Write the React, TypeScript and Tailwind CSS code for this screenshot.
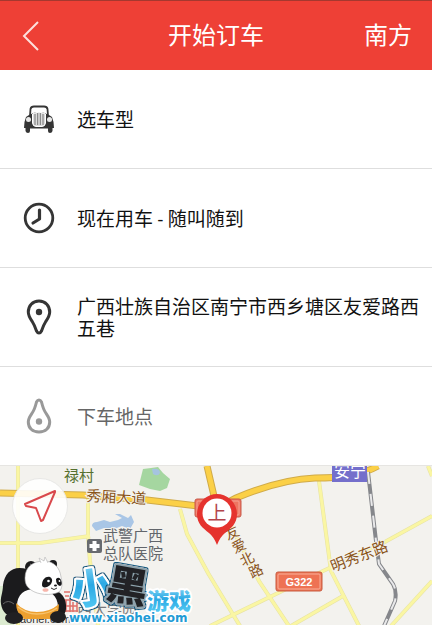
import React from "react";

const rows = [
  { id: "car", label: "选车型", icon: "car", muted: false },
  { id: "time", label: "现在用车 - 随叫随到", icon: "clock", muted: false },
  {
    id: "from",
    label: "广西壮族自治区南宁市西乡塘区友爱路西五巷",
    icon: "pin",
    muted: false,
  },
  { id: "to", label: "下车地点", icon: "drop", muted: true },
];

const minorRoads = [
  "M18 0V160",
  "M0 77H40L90 70",
  "M88 30V70L90 95L98 160",
  "M180 43L187 68L208 107L240 160",
  "M226 50L259 115L289 160",
  "M319 15L331 105L359 160",
  "M210 160L276 128L323 105L383 77L432 50",
  "M291 160L343 130",
  "M391 160L432 115",
  "M428 0L432 10",
];

const mainRoads = [
  "M0 27L83 29L147 34L215 42",
  "M207 0L214 30L217 42",
  "M217 42L236 32C262 21 290 13 315 12C340 12 360 10 378 0",
];

const railway = "M368 6L376 75L379 98L393 118Q397 125 395 135L384 160";

const CarIcon = () => (
  <svg viewBox="0 0 32 30" className="h-[30px] w-8">
    <path
      d="M7 12L7.500 5Q8 2.500 11 2.500H21Q24 2.500 24.500 5L25 12"
      fill="none"
      stroke="#353535"
      strokeWidth="1.800"
    />
    <path
      d="M6 11Q16 5 26 11L29 13L30.500 18L31 24H29.500V27Q29 29 27 29Q25 29 25 27V24.500H7V27Q7 29 5 29Q3 29 2.500 27V24H1L1.500 18L3 13Z"
      fill="#353535"
    />
    <path
      d="M9.500 10Q16 6.500 22.500 10V19Q22 22.500 19 22.500H13Q10 22.500 9.500 19Z"
      fill="#ddd"
      stroke="#fff"
      strokeWidth="1"
    />
    <path
      d="M12 10V21M14.700 9V21M17.300 9V21M20 10V21"
      stroke="#777"
      strokeWidth="1"
    />
    <circle cx="5.500" cy="15.500" r="2.500" fill="#e8e8e8" />
    <circle cx="26.500" cy="15.500" r="2.500" fill="#e8e8e8" />
  </svg>
);

const ClockIcon = () => (
  <svg viewBox="0 0 32 32" className="size-8" fill="none" stroke="#353535">
    <circle cx="16" cy="16" r="13.800" strokeWidth="2.800" />
    <path
      d="M16.500 8V17L10 21"
      strokeWidth="3.200"
      strokeLinecap="round"
      strokeLinejoin="round"
    />
  </svg>
);

const PinIcon = () => (
  <svg viewBox="0 0 26 36" className="h-9 w-[26px]">
    <path
      d="M13 2C6.500 2 2.300 6.800 2.300 13C2.300 17 4.500 20 6.500 23C8.500 26 9.500 29 10.500 32Q11.500 34 13 34Q14.500 34 15.500 32C16.500 29 17.500 26 19.500 23C21.500 20 23.700 17 23.700 13C23.700 6.800 19.500 2 13 2Z"
      fill="none"
      stroke="#353535"
      strokeWidth="3"
    />
    <circle cx="13" cy="13" r="3.200" fill="#353535" />
  </svg>
);

const DropIcon = () => (
  <svg viewBox="0 0 26 36" className="h-9 w-[26px]">
    <path
      d="M13 34C6.500 34 2.300 30 2.300 24C2.300 20 4.500 17.500 6.500 14.500C8.500 11.500 9.500 8 10.500 4Q11.500 2 13 2Q14.500 2 15.500 4C16.500 8 17.500 11.500 19.500 14.500C21.500 17.500 23.700 20 23.700 24C23.700 30 19.500 34 13 34Z"
      fill="none"
      stroke="#999"
      strokeWidth="3"
    />
    <circle cx="13" cy="23.500" r="3.200" fill="#999" />
  </svg>
);

const icons: Record<string, React.ReactNode> = {
  car: <CarIcon />,
  clock: <ClockIcon />,
  pin: <PinIcon />,
  drop: <DropIcon />,
};

const Panda = () => (
  <g>
    {/* BODY */}
    <path
      d="M27 103C13 99 5 106 3 119C3 127 0 131 1 138C2 146 8 151 16 152L30 148L36 118Z"
      fill="#1b1b1d"
    />
    <path
      d="M52 124C61 124 67 133 66 143C65 151 59 154 50 153Z"
      fill="#1b1b1d"
    />
    <path
      d="M17 140C17 127 26 122 38 123C50 123 58 130 58 141C58 150 50 152 38 152C25 152 17 150 17 140Z"
      fill="#fbfbfb"
    />
    <path
      d="M16 137Q24 146 37 146Q50 146 59 138Q59 148 53 153H24Q16 147 16 137Z"
      fill="#eda02f"
    />
    <path
      d="M18 141Q26 148 37 148Q49 148 57 142"
      fill="none"
      stroke="#f8c36d"
      strokeWidth="1.500"
    />
    <ellipse cx="14" cy="152" rx="9" ry="6" fill="#202022" />
    <ellipse cx="58" cy="151" rx="8" ry="6" fill="#202022" />
    <path d="M3 138Q8 133 14 138" fill="none" stroke="#666" />
    {/* HEAD */}
    <circle cx="31" cy="101" r="6" fill="#1b1b1d" />
    <path d="M30 98Q34 99 34 103" fill="none" stroke="#777" />
    <circle cx="53" cy="98" r="4" fill="#1b1b1d" />
    <path
      d="M25 112C25 100 34 95 44 95C54 95 60 102 61 111C63 118 62 123 59 126C51 130 38 129 31 124C27 121 25 118 25 112Z"
      fill="#fff"
      stroke="#aaa"
      strokeWidth="0.600"
    />
    <path
      d="M41 97L39 92L44 95L45 91L48 97"
      fill="#fff"
      stroke="#bbb"
      strokeWidth="0.700"
    />
    <path
      d="M42 119C42 113 46 110 50 111C54 113 52 119 47 121C44 122 42 121 42 119Z"
      fill="#19191b"
    />
    <path
      d="M56 113Q59 110 61 114Q63 119 60 120Q56 119 56 113Z"
      fill="#19191b"
    />
    <circle cx="48.500" cy="115" r="1.300" fill="#fff" />
    <circle cx="59.500" cy="115" r="0.900" fill="#fff" />
    <ellipse cx="45.500" cy="124" rx="3" ry="1.800" fill="#f7b6ac" />
    <ellipse cx="55.500" cy="119.500" rx="1.500" ry="1" fill="#19191b" />
    <path d="M51 122Q54 125 57 122" fill="none" stroke="#333" />
  </g>
);

const SiteLogo = () => (
  <g fontFamily="'Noto Sans CJK SC', sans-serif" fontWeight="900">
    <defs>
      <linearGradient id="blue" x1="0" y1="0" x2="0" y2="1">
        <stop offset="0" stopColor="#a5e5fb" />
        <stop offset="0.500" stopColor="#2ba9e4" />
        <stop offset="1" stopColor="#5ed0f5" />
      </linearGradient>
      <filter id="edge" x="-20%" y="-20%" width="140%" height="140%">
        <feMorphology in="SourceAlpha" operator="dilate" radius="1" />
        <feComposite in2="SourceAlpha" operator="out" result="rim" />
        <feFlood floodColor="#175a80" />
        <feComposite in2="rim" operator="in" />
        <feComposite in="SourceGraphic" operator="over" />
        <feMerge>
          <feMergeNode />
        </feMerge>
      </filter>
    </defs>
    <g strokeLinejoin="round" paintOrder="stroke">
      <g filter="url(#edge)">
        <text
          x="71"
          y="137"
          fontSize="41"
          fill="url(#blue)"
          stroke="#fff"
          strokeWidth="4"
          transform="rotate(-8 91 122)"
        >
          小
        </text>
      </g>
      <g filter="url(#edge)">
        <text
          x="107"
          y="135"
          fontSize="41"
          fill="#202326"
          stroke="#8fa3ad"
          strokeWidth="4"
          transform="rotate(10 127 120)"
        >
          黑
        </text>
      </g>
      <text
        x="147"
        y="143"
        fontSize="22"
        fill="url(#blue)"
        stroke="#fff"
        strokeWidth="4"
      >
        游戏
      </text>
      <text
        x="69"
        y="156"
        fontSize="12"
        fontFamily="'DejaVu Sans', sans-serif"
        fontWeight="700"
        fill="#229bd5"
        stroke="#fff"
        strokeWidth="3"
      >
        www.xiaohei.com
      </text>
    </g>
  </g>
);

const CityMap = () => (
  <svg
    viewBox="0 0 432 160"
    preserveAspectRatio="xMidYMid slice"
    className="block w-full"
    fontFamily="'Noto Sans CJK SC', sans-serif"
  >
    <rect width="432" height="160" fill="#f3f2ee" />
    <path d="M0 120H14V160H0Z" fill="#dcebd0" />
    <path
      d="M143 3L151 2L158 1L163 7L170 13L167 22L160 25L150 23L139 19Z"
      fill="#a5d6a0"
    />
    <path d="M152 3Q160 2 160 7Q158 11 153 8Z" fill="#a5c4e0" />
    <path
      d="M92 60Q92 56 97 56L104 54L110 56L118 54L122 52L115 48L120 48L128 52L131 49L134 56L130 63L122 60L114 63L104 62L96 65Z"
      fill="#a9c6e6"
    />
    {minorRoads.map((d) => (
      <path key={d} d={d} fill="none" stroke="#e6e2a4" strokeWidth="4" />
    ))}
    {minorRoads.map((d) => (
      <path key={d} d={d} fill="none" stroke="#faf6a3" strokeWidth="3" />
    ))}
    {mainRoads.map((d) => (
      <path key={d} d={d} fill="none" stroke="#d0ab49" strokeWidth="7" />
    ))}
    {mainRoads.map((d) => (
      <path key={d} d={d} fill="none" stroke="#fbd047" strokeWidth="5" />
    ))}
    <path d={railway} fill="none" stroke="#85878b" strokeWidth="4" />
    <path
      d={railway}
      fill="none"
      stroke="#e9e9ea"
      strokeWidth="2"
      strokeDasharray="12 10"
    />

    {/* LABELS */}
    <g
      fill="#8a5418"
      stroke="#f3f2ee"
      strokeWidth="2"
      paintOrder="stroke"
    >
      <text x="64" y="15" fontSize="15" fill="#55702f">
        禄村
      </text>
      <text x="86" y="35" fontSize="15" transform="rotate(3 86 35)">
        秀厢大道
      </text>
      <text x="103" y="75" fontSize="15" fill="#62666b">
        武警广西
      </text>
      <text x="103" y="93" fontSize="15" fill="#62666b">
        总队医院
      </text>
      <text x="333" y="106" fontSize="15" transform="rotate(-21 333 106)">
        明秀东路
      </text>
      <g fontSize="14" textAnchor="middle">
        <text x="232" y="72" transform="rotate(-25 232 67)">
          友
        </text>
        <text x="239" y="85" transform="rotate(-25 239 80)">
          爱
        </text>
        <text x="247" y="98" transform="rotate(-25 247 93)">
          北
        </text>
        <text x="256" y="110" transform="rotate(-25 256 105)">
          路
        </text>
      </g>
      <text x="77" y="149" fontSize="15" fill="#77797b">
        西大学园
      </text>
    </g>
    <path
      d="M64 126H70M65 130H69M64 134H78M66 134V146M70 132V146M64 140H77M73 136V146M77 136V146M64 145H78"
      stroke="#e0706b"
      strokeWidth="1.500"
    />
    <rect x="87" y="73" width="15" height="14" rx="2" fill="#686b70" />
    <path d="M94.500 75V85M89.500 80H99.500" stroke="#fff" strokeWidth="4" />
    <rect x="332" y="0" width="35" height="16" fill="#746fcb" />
    <text x="334" y="11" fontSize="16" fill="#fff">
      安宁
    </text>
    <rect
      x="276"
      y="106"
      width="46"
      height="19"
      rx="2"
      fill="#ee7253"
      stroke="#c75b3f"
    />
    <rect
      x="278"
      y="108"
      width="42"
      height="15"
      rx="1"
      fill="none"
      stroke="#f9b09a"
    />
    <text
      x="299"
      y="120"
      fontSize="11"
      fontWeight="700"
      textAnchor="middle"
      fill="#fff"
      fontFamily="'Liberation Sans', sans-serif"
    >
      G322
    </text>

    {/* PICK-UP MARKER */}
    <rect
      x="195"
      y="33"
      width="46"
      height="18"
      rx="2"
      fill="#ee7560"
      stroke="#c75b4b"
    />
    <rect
      x="197"
      y="35"
      width="42"
      height="14"
      rx="1"
      fill="none"
      stroke="#f5a393"
    />
    <path
      d="M217 28C206 28 197 37 197 48C197 58 203 62 209 67Q214 71 217 79Q220 71 225 67C231 62 237 58 237 48C237 37 228 28 217 28Z"
      fill="#e5332e"
    />
    <circle cx="217" cy="47" r="14.500" fill="#fff" />
    <text x="217" y="54" fontSize="19" textAnchor="middle" fill="#b3444a">
      上
    </text>

    <text
      x="12"
      y="157"
      fontSize="11"
      fill="#333"
      fontFamily="'Liberation Sans', sans-serif"
    >
      xiaohei.com
    </text>
    <Panda />
    <SiteLogo />
    <path d="M0 159.500H432" stroke="#f1a79b" />
  </svg>
);

const App = () => {
  return (
    <div className="bg-white font-['Roboto','Noto_Sans_CJK_SC',sans-serif]">
      {/* HEADER */}
      <header className="grid h-[70px] grid-cols-[1fr_auto_1fr] items-center border-t border-[#a5382f] bg-[#ee4036] px-5 text-2xl text-white">
        <button aria-label="返回" className="justify-self-start">
          <svg viewBox="0 0 22 32" className="h-8 w-[22px]">
            <path
              d="M18 2L4 16L18 30"
              fill="none"
              stroke="#fde0dd"
              strokeWidth="2"
            />
          </svg>
        </button>
        <h1>开始订车</h1>
        <button className="justify-self-end">南方</button>
      </header>
      {/* ORDER OPTIONS */}
      <ul>
        {rows.map((row) => (
          <li
            key={row.id}
            className="border-b border-[#dedede] last:border-[#e6e5e2]"
          >
            <button
              className={`flex min-h-[98px] w-full items-center pr-3 text-left text-[19px] leading-[22px] ${
                row.muted ? "text-[#666]" : "text-[#111]"
              }`}
            >
              <span className="flex w-[77px] shrink-0 justify-center">
                {icons[row.icon]}
              </span>
              <span className="pt-1">{row.label}</span>
            </button>
          </li>
        ))}
      </ul>
      {/* MAP */}
      <div className="relative">
        <CityMap />
        <button
          aria-label="定位"
          className="absolute top-3 left-3 flex size-14 items-center justify-center rounded-full border border-[#e8e8e6] bg-white/90"
        >
          <svg viewBox="0 0 34 34" className="size-[34px]">
            <path
              d="M32 2L2 15L3 17L13 19L18 32L20 31L32 3Z"
              fill="none"
              stroke="#d9494c"
              strokeWidth="2"
              strokeLinejoin="round"
            />
          </svg>
        </button>
      </div>
    </div>
  );
};

export default App;
